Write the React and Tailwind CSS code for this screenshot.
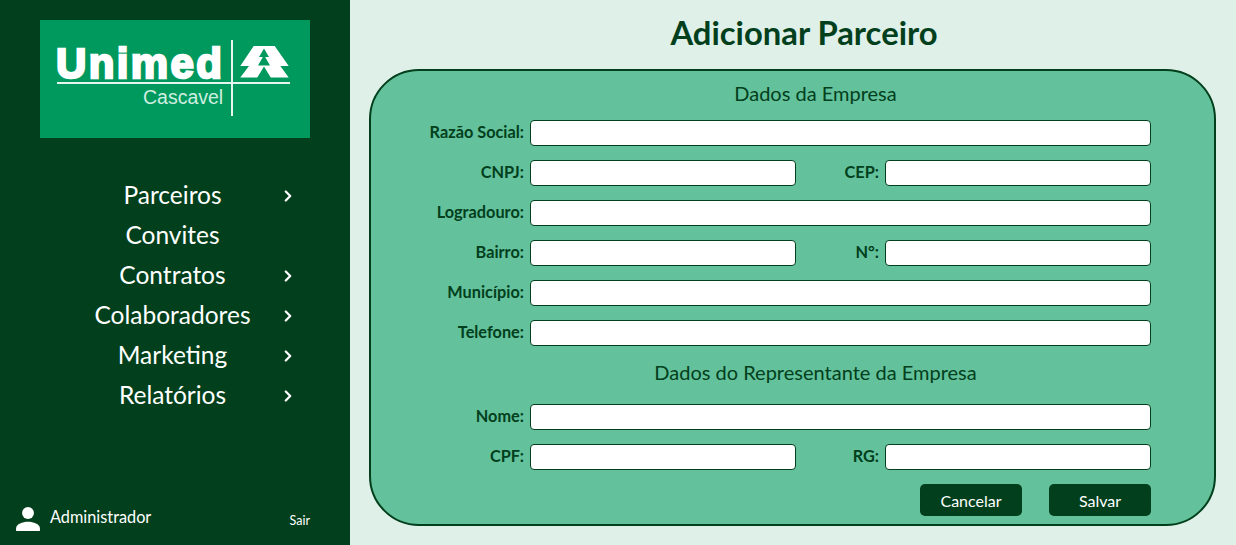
import React from 'react';
import { ChevronRight } from 'lucide-react';

const menu = [
    { label: 'Parceiros', arrow: true },
    { label: 'Convites', arrow: false },
    { label: 'Contratos', arrow: true },
    { label: 'Colaboradores', arrow: true },
    { label: 'Marketing', arrow: true },
    { label: 'Relatórios', arrow: true },
];

function Logo() {
    return (
        <div className="relative w-[270px] h-[118px] ml-[40px] bg-[#00995d] overflow-hidden">
            <span className="absolute left-[16px] top-[20px] text-white text-[42px] leading-[48px] font-bold tracking-[2.4px] font-['Liberation_Sans',sans-serif] [-webkit-text-stroke:2.4px_white]">Unimed</span>
            <span className="absolute left-[103px] top-[65px] text-[#cfeee0] text-[19.5px] leading-[24px] font-['Liberation_Sans',sans-serif]">Cascavel</span>
            <svg className="absolute left-0 top-0" width="270" height="118" viewBox="0 0 270 118">
                <rect x="17" y="62" width="233" height="2" fill="#e6f6ee" />
                <rect x="191" y="20" width="2" height="76" fill="#e6f6ee" />
                <path d="M213.700 26h21l14 20h-8.400l8.400 11.500h-48.400l8.700-11.500h-8.700z" fill="#fff" />
                <path d="M224 28.500l-5 8.500h10z M224 35l-6 10.500h12z M224 46.500l-7 11.500h14z" fill="#00995d" />
            </svg>
        </div>
    );
}

function Sidebar() {
    return (
        <div className="w-[350px] h-full shrink-0 bg-[#023f1c] text-white flex flex-col pt-[20px] pb-[13px]">
            <Logo />
            <div className="mt-[38px] flex flex-col">
                {menu.map((item) => (
                    <div key={item.label} className="h-[40px] flex items-center">
                        <span className="w-[345px] h-[40px] text-center text-[24.5px] leading-[38px]">{item.label}</span>
                        {item.arrow && <ChevronRight className="-ml-[66px] text-white" size={18} strokeWidth={3} />}
                    </div>
                ))}
            </div>
            <div className="mt-auto flex items-center pl-[15px] pr-[40px]">
                <svg width="26" height="26" viewBox="0 0 24 24" fill="white">
                    <circle cx="12" cy="6.5" r="5.5" />
                    <path d="M1 23v-2.500C1 16.500 7 14.500 12 14.500s11 2 11 6V23z" />
                </svg>
                <span className="ml-[9px] mb-[5px] text-[16.3px] leading-[20px]">Administrador</span>
                <span className="ml-auto mt-[4px] text-[12.5px] leading-[16px]">Sair</span>
            </div>
        </div>
    );
}

function Label({ text, className }) {
    return <label className={`text-[16.3px] leading-[24px] mb-[2px] font-bold text-[#023f1c] text-right ${className}`}>{text}</label>;
}

function Input({ className }) {
    return <input className={`h-[26px] bg-white border border-[#023f1c] rounded-[4px] ${className}`} />;
}

function FullRow({ label }) {
    return (
        <div className="h-[26px] flex items-center">
            <Label text={label} className="w-[139px]" />
            <Input className="ml-[6px] w-[621px]" />
        </div>
    );
}

function HalfRow({ left, right }) {
    return (
        <div className="h-[26px] flex items-center">
            <Label text={left} className="w-[139px]" />
            <Input className="ml-[6px] w-[266px]" />
            <Label text={right} className="w-[83px]" />
            <Input className="ml-[6px] w-[266px]" />
        </div>
    );
}

export default function App() {
    return (
        <div className="w-[1236px] h-[545px] flex overflow-hidden bg-[#dff0e8] font-['Lato',sans-serif]">
            <Sidebar />
            <div className="flex-1 flex flex-col pl-[19px]">
                <h1 className="w-[870px] mt-[13px] h-[40px] text-center text-[32.8px] leading-[40px] font-bold text-[#023f1c]">Adicionar Parceiro</h1>
                <div className="mt-[16px] w-[847px] h-[457px] bg-[#63c19b] border-2 border-[#023f1c] rounded-[50px] px-[14px] pt-[9px] flex flex-col">
                    <h2 className="text-center text-[20px] leading-[26px] text-[#023f1c] ml-[46px]">Dados da Empresa</h2>
                    <div className="mt-[14px] flex flex-col gap-[14px]">
                        <FullRow label="Razão Social:" />
                        <HalfRow left="CNPJ:" right="CEP:" />
                        <FullRow label="Logradouro:" />
                        <HalfRow left="Bairro:" right="N°:" />
                        <FullRow label="Município:" />
                        <FullRow label="Telefone:" />
                    </div>
                    <h2 className="mt-[13px] text-center text-[20px] leading-[26px] text-[#023f1c] ml-[46px]">Dados do Representante da Empresa</h2>
                    <div className="mt-[19px] flex flex-col gap-[14px]">
                        <FullRow label="Nome:" />
                        <HalfRow left="CPF:" right="RG:" />
                    </div>
                    <div className="mt-[14px] flex gap-[27px] pl-[535px]">
                        <button className="w-[102px] h-[32px] pt-[1px] bg-[#023f1c] text-white text-[16px] rounded-[5px]">Cancelar</button>
                        <button className="w-[102px] h-[32px] pt-[1px] bg-[#023f1c] text-white text-[16px] rounded-[5px]">Salvar</button>
                    </div>
                </div>
            </div>
        </div>
    );
}
